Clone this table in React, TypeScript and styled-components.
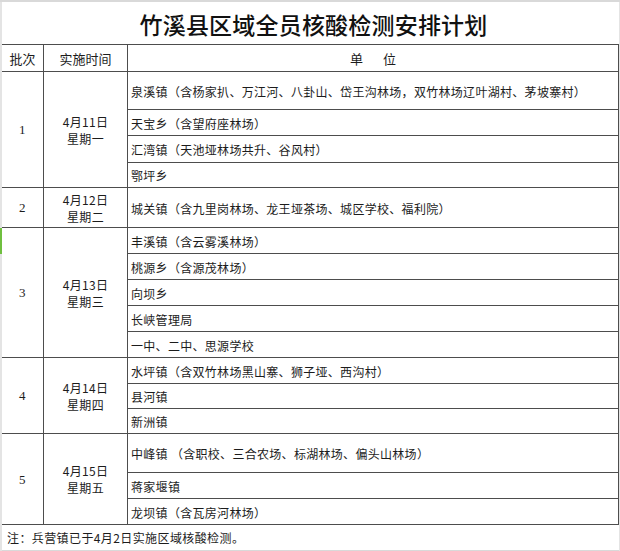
import React from "react";
import styled, { createGlobalStyle } from "styled-components";

const Global = createGlobalStyle`
  html, body { margin: 0; padding: 0; background: #fff; }
  body { font-family: "Noto Sans CJK SC", "Noto Sans", sans-serif; }
`;

const LINE = "#4d4d4d";
const GRID = "#d9d9d9";

const Page = styled.div`
  width: 620px;
  height: 551px;
  box-sizing: border-box;
  border-top: 2px solid ${GRID};
  display: flex;
  background: #fff;
  overflow: hidden;
`;

const Gutter = styled.div`
  width: 2px;
  flex: none;
  background: #e4e4e4;
  display: flex;
  flex-direction: column;
`;

const GutterMark = styled.div<{ $top: number; $h: number }>`
  margin-top: ${(p) => p.$top}px;
  height: ${(p) => p.$h}px;
  background: #6fbf3f;
`;

const Sheet = styled.div`
  width: 617px;
  flex: none;
  display: flex;
  flex-direction: column;
  color: #1c1c1c;
  font-size: 12px;
  letter-spacing: 0.3px;
`;

const RightGutter = styled.div`
  flex: 1;
  background: #e4e4e4;
`;

const TitleRow = styled.div`
  height: 43px;
  box-sizing: border-box;
  border-bottom: 1px solid ${LINE};
  display: flex;
  align-items: center;
  justify-content: center;
  font-size: 23px;
  font-weight: 500;
  letter-spacing: 0.2px;
  color: #111;
  padding-left: 6px;
  padding-top: 2px;
`;

const Row = styled.div<{ $h: number }>`
  display: flex;
  height: ${(p) => p.$h}px;
  flex: none;
`;

const Cell = styled.div<{ $w?: number; $center?: boolean; $serif?: boolean }>`
  box-sizing: border-box;
  ${(p) => (p.$w ? `width: ${p.$w}px; flex: none;` : "flex: 1;")}
  border-right: 1px solid ${LINE};
  border-bottom: 1px solid ${LINE};
  display: flex;
  flex-direction: column;
  justify-content: center;
  align-items: ${(p) => (p.$center ? "center" : "flex-start")};
  text-align: ${(p) => (p.$center ? "center" : "left")};
  padding: ${(p) => (p.$center ? "0" : "0 0 0 3px")};
  line-height: 17px;
  white-space: pre;
  font-family: ${(p) =>
    p.$serif
      ? `"Liberation Serif", "Noto Sans CJK SC", serif`
      : `"Noto Sans CJK SC", "Noto Sans", sans-serif`};
  font-size: ${(p) => (p.$serif ? "13px" : "12px")};
`;

const HeaderCell = styled(Cell)`
  font-size: 13px;
  letter-spacing: 0;
`;

const Spaced = styled.span`
  word-spacing: 17px;
`;

const Units = styled.div`
  flex: 1;
  display: flex;
  flex-direction: column;
`;

const UnitRow = styled(Cell)<{ $h: number }>`
  flex: none;
  height: ${(p) => p.$h}px;
  padding-top: 1px;
`;

const NoteRow = styled.div`
  height: 26px;
  box-sizing: border-box;
  border-bottom: 1px solid ${GRID};
  display: flex;
  align-items: center;
  padding-left: 5px;
  font-size: 12px;
  letter-spacing: 0.4px;
`;

type Group = {
  no: string;
  date: string;
  week: string;
  units: [string, number][];
};

const groups: Group[] = [
  {
    no: "1",
    date: "4月11日",
    week: "星期一",
    units: [
      ["泉溪镇（含杨家扒、万江河、八卦山、岱王沟林场，双竹林场辽叶湖村、茅坡寨村）", 38],
      ["天宝乡（含望府座林场）", 26],
      ["汇湾镇（天池垭林场共升、谷风村）", 27],
      ["鄂坪乡", 25],
    ],
  },
  {
    no: "2",
    date: "4月12日",
    week: "星期二",
    units: [["城关镇（含九里岗林场、龙王垭茶场、城区学校、福利院）", 40]],
  },
  {
    no: "3",
    date: "4月13日",
    week: "星期三",
    units: [
      ["丰溪镇（含云雾溪林场）", 26],
      ["桃源乡（含源茂林场）", 26],
      ["向坝乡", 26],
      ["长峡管理局", 26],
      ["一中、二中、思源学校", 26],
    ],
  },
  {
    no: "4",
    date: "4月14日",
    week: "星期四",
    units: [
      ["水坪镇（含双竹林场黑山寨、狮子垭、西沟村）", 26],
      ["县河镇", 25],
      ["新洲镇", 25],
    ],
  },
  {
    no: "5",
    date: "4月15日",
    week: "星期五",
    units: [
      ["中峰镇 （含职校、三合农场、标湖林场、偏头山林场）", 39],
      ["蒋家堰镇", 26],
      ["龙坝镇（含瓦房河林场）", 26],
    ],
  },
];

export default function App() {
  return (
    <>
      <Global />
      <Page>
        <Gutter>
          <GutterMark $top={226} $h={26} />
        </Gutter>
        <Sheet>
          <TitleRow>竹溪县区域全员核酸检测安排计划</TitleRow>
          <Row $h={27}>
            <HeaderCell $w={42} $center>批次</HeaderCell>
            <HeaderCell $w={84} $center>实施时间</HeaderCell>
            <HeaderCell $center>
              <Spaced>单 位</Spaced>
            </HeaderCell>
          </Row>
          {groups.map((g) => (
            <Row key={g.no} $h={g.units.reduce((s, u) => s + u[1], 0)}>
              <Cell $w={42} $center $serif>
                {g.no}
              </Cell>
              <Cell $w={84} $center>
                <span>{g.date}</span>
                <span>{g.week}</span>
              </Cell>
              <Units>
                {g.units.map(([t, h]) => (
                  <UnitRow key={t} $h={h}>
                    {t}
                  </UnitRow>
                ))}
              </Units>
            </Row>
          ))}
          <NoteRow>注：兵营镇已于4月2日实施区域核酸检测。</NoteRow>
        </Sheet>
        <RightGutter />
      </Page>
    </>
  );
}
